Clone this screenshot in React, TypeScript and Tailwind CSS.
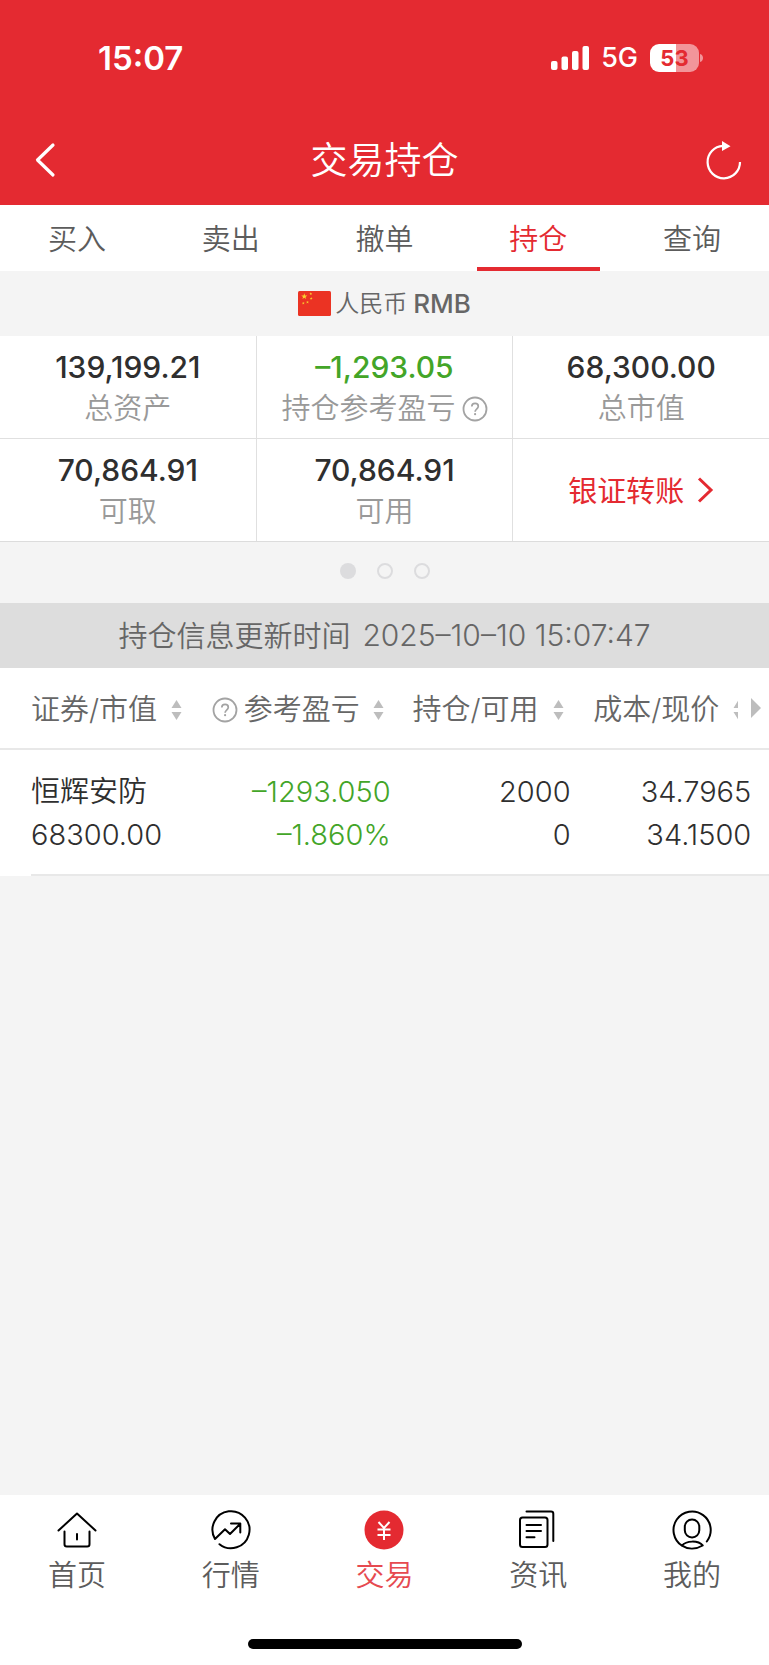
import React from "react";

const BODY_FONT = "font-['Inter','Noto_Sans_CJK_SC',sans-serif]";

function SortIcon() {
  return (
    <svg width="11" height="20" viewBox="0 0 11 20" className="shrink-0" aria-hidden="true">
      <path d="M5.5 0 10.5 8H.5ZM.5 12h10l-5 8Z" fill="#bdbdbd" />
    </svg>
  );
}

function HelpIcon() {
  return (
    <svg width="26" height="26" viewBox="0 0 26 26" fill="none" className="shrink-0" aria-hidden="true">
      <circle cx="13" cy="13" r="11.5" stroke="#a3a3a3" strokeWidth="1.8" />
      <path
        d="M9.8 10.6c0-2 1.4-3.3 3.3-3.3s3.2 1.2 3.2 2.9c0 1.4-.8 2.1-1.7 2.9-1 .9-1.5 1.4-1.5 2.7"
        stroke="#a3a3a3"
        strokeWidth="1.7"
      />
      <circle cx="13.1" cy="18.2" r="1.1" fill="#a3a3a3" />
    </svg>
  );
}

function StatusBar() {
  return (
    <div className="flex h-[115px] items-center justify-between pr-[65px] pl-[98px]">
      <span className="text-[33px] leading-10 font-semibold">15:07</span>
      <div className="flex items-center">
        <svg width="38" height="24" viewBox="0 0 38 24" fill="#fff" aria-hidden="true">
          <rect x="0" y="15" width="6.5" height="9" rx="2" />
          <rect x="10.5" y="10.5" width="6.5" height="13.5" rx="2" />
          <rect x="21" y="5" width="6.5" height="19" rx="2" />
          <rect x="31.5" y="0" width="6.5" height="24" rx="2" />
        </svg>
        <span className="ml-3 text-[27px] leading-8 font-medium">5G</span>
        <div className="ml-3 flex h-7 w-[49px] items-center justify-center rounded-[9px] bg-linear-to-r from-white from-53% to-[#f2959a] to-53% text-[22px] leading-7 font-bold text-[#e42a31]">
          53
        </div>
        <svg width="4" height="10" viewBox="0 0 4 10" className="ml-px" aria-hidden="true">
          <path d="M0 1c4 1 4 7 0 8Z" fill="#f2959a" />
        </svg>
      </div>
    </div>
  );
}

function TitleBar() {
  return (
    <div className="flex h-[90px] items-center justify-between pr-6 pl-7">
      <button type="button" aria-label="返回" className="flex size-9 items-center justify-center">
        <svg width="36" height="36" viewBox="0 0 36 36" fill="none" stroke="#fff" aria-hidden="true">
          <path d="M25 3 9.5 18 25 33" strokeWidth="3.2" strokeLinecap="round" strokeLinejoin="round" />
        </svg>
      </button>
      <h1 className="pt-[2px] text-[37px] leading-[48px] font-[350]">交易持仓</h1>
      <button type="button" aria-label="刷新" className="flex size-10 items-center justify-center">
        <svg width="40" height="40" viewBox="0 0 40 40" fill="none" aria-hidden="true">
          <path d="M35 22A16.2 16.2 0 1 1 18 5.9" stroke="#fff" strokeWidth="2.2" />
          <path d="M17 1 25.5 6.2 17 11Z" fill="#fff" />
        </svg>
      </button>
    </div>
  );
}

const tabs = ["买入", "卖出", "撤单", "持仓", "查询"];

function Tabs() {
  return (
    <nav className="grid h-[66px] grid-cols-5 bg-white text-[29px] font-[350] text-[#5c5c5c]">
      {tabs.map((tab) => (
        <button key={tab} type="button" className="flex flex-col items-center">
          <span
            className={
              tab === "持仓" ? "flex flex-1 items-center pt-[7px] text-[#e42a31]" : "flex flex-1 items-center pt-[7px]"
            }
          >
            {tab}
          </span>
          <span className={tab === "持仓" ? "h-1 w-4/5 bg-[#e42a31]" : "h-1 w-4/5"} />
        </button>
      ))}
    </nav>
  );
}

function Star({ x, y, r }: { x: number; y: number; r: number }) {
  const points = Array.from({ length: 10 }, (_, i) => {
    const radius = i % 2 ? r * 0.4 : r;
    const angle = (Math.PI / 5) * i - Math.PI / 2;
    return `${x + radius * Math.cos(angle)},${y + radius * Math.sin(angle)}`;
  }).join(" ");
  return <polygon points={points} fill="#f8d02e" />;
}

function Currency() {
  return (
    <div className="flex h-[65px] items-center justify-center text-[24px] text-[#666]">
      <svg width="33" height="25" viewBox="0 0 33 25" className="mr-1" aria-hidden="true">
        <rect width="33" height="25" rx="1.5" fill="#eb3323" />
        <Star x={6.3} y={5.5} r={3.2} />
        <Star x={12.8} y={2.8} r={1.5} />
        <Star x={13.2} y={7.5} r={1.5} />
        <Star x={9.5} y={11.2} r={1.5} />
        <Star x={5.3} y={12.2} r={1.5} />
      </svg>
      <span className="font-[350]">人民币</span>
      <span className="ml-[6px] text-[26px] font-medium">RMB</span>
    </div>
  );
}

type Figure = { value: string; label: string; help?: boolean; loss?: boolean };

const figures: Figure[] = [
  { value: "139,199.21", label: "总资产" },
  { value: "–1,293.05", label: "持仓参考盈亏", help: true, loss: true },
  { value: "68,300.00", label: "总市值" },
  { value: "70,864.91", label: "可取" },
  { value: "70,864.91", label: "可用" },
];

function Summary() {
  return (
    <section className="grid grid-cols-3 gap-px border-b border-[#dcdcdc] bg-[#e0e0e0]">
      {figures.map((f) => (
        <div key={f.label} className="flex flex-col items-center bg-white pt-[10px] pb-2 leading-[42px]">
          <span
            className={
              f.loss ? "text-[30px] font-[450] text-[#43a528]" : "text-[30px] font-[450] text-[#2f2f2f]"
            }
          >
            {f.value}
          </span>
          <span className="flex items-center gap-[6px] text-[29px] font-[350] text-[#999]">
            {f.label}
            {f.help && <HelpIcon />}
          </span>
        </div>
      ))}
      <a href="#transfer" className="flex items-center justify-center gap-3 bg-white text-[29px] text-[#e42a31]">
        <span className="pt-[3px]">银证转账</span>
        <svg width="18" height="28" viewBox="0 0 18 28" fill="none" aria-hidden="true">
          <path d="M3 2.5 15 14 3 25.5" stroke="#e42a31" strokeWidth="3" />
        </svg>
      </a>
    </section>
  );
}

function Dots() {
  return (
    <div className="flex h-[61px] items-center justify-center gap-[21px] pb-1">
      <span className="size-4 rounded-full bg-[#dcdcde]" />
      <span className="size-4 rounded-full border-2 border-[#dcdcde]" />
      <span className="size-4 rounded-full border-2 border-[#dcdcde]" />
    </div>
  );
}

function Holdings() {
  const lines = "border-b-2 border-[#e8e8e8] pt-5 pb-[18px] leading-[43px]";
  return (
    <table className="w-full table-fixed border-collapse bg-white text-[29px]">
      <colgroup>
        <col className="w-[27.4%]" />
        <col className="w-[23.4%]" />
        <col className="w-[23.4%]" />
        <col className="w-[23.5%]" />
        <col />
      </colgroup>
      <thead>
        <tr className="h-[81px] border-b-2 border-[#e8e8e8] whitespace-nowrap text-[#666]">
          <th className="p-0 pt-1 pl-[31px] font-[350]">
            <button type="button" className="flex items-center gap-[14px]">
              证券/市值
              <SortIcon />
            </button>
          </th>
          <th className="p-0 pt-1 pr-[7px] font-[350]">
            <button type="button" className="ml-auto flex items-center gap-[13px]">
              <span className="flex items-center gap-[6px]">
                <HelpIcon />
                参考盈亏
              </span>
              <SortIcon />
            </button>
          </th>
          <th className="p-0 pt-1 pr-[7px] font-[350]">
            <button type="button" className="ml-auto flex items-center gap-[14px]">
              持仓/可用
              <SortIcon />
            </button>
          </th>
          <th className="p-0 pt-1 pr-[13px] font-[350]">
            <button type="button" className="ml-auto flex items-center gap-[14px]">
              成本/现价
              <span className="w-[5px] overflow-hidden">
                <SortIcon />
              </span>
            </button>
          </th>
          <th className="p-0">
            <svg width="10" height="20" viewBox="0 0 10 20" aria-hidden="true">
              <path d="M0 0 10 10 0 20Z" fill="#bdbdbd" />
            </svg>
          </th>
        </tr>
      </thead>
      <tbody>
        <tr className="text-right font-[350] text-[#2f2f2f]">
          <td className="p-0 pl-[31px] text-left">
            <div className={lines}>
              恒辉安防
              <br />
              68300.00
            </div>
          </td>
          <td className="p-0 text-[#43a528]">
            <div className={lines}>
              –1293.050
              <br />
              –1.860%
            </div>
          </td>
          <td className="p-0">
            <div className={lines}>
              2000
              <br />0
            </div>
          </td>
          <td className="p-0">
            <div className={lines}>
              34.7965
              <br />
              34.1500
            </div>
          </td>
          <td className="p-0">
            <div className={lines}>
              <br />
              <br />
            </div>
          </td>
        </tr>
      </tbody>
    </table>
  );
}

const stroke = { fill: "none", stroke: "#000", strokeWidth: 2, strokeLinecap: "round", strokeLinejoin: "round" } as const;

const navItems = [
  {
    label: "首页",
    icon: (
      <g {...stroke}>
        <path d="M1.5 20.5 20 3.5l18.500 17M7.5 21.5v12.700q0 2.300 2.300 2.300h20.400q2.300 0 2.300-2.300V21.500M20 24v5.500" />
      </g>
    ),
  },
  {
    label: "行情",
    icon: (
      <g {...stroke}>
        <path d="M8.500 34.200A18.500 18.500 0 1 0 4 29l10-9.800 5 4.800L29 14M20 13.500h9.300v9" />
      </g>
    ),
  },
  {
    label: "交易",
    icon: (
      <g>
        <circle cx="20" cy="20" r="19.5" fill="#e42a31" />
        <path
          d="m14.500 12 5.500 6 5.500-6M13.500 19.500h13M13.500 25h13M20 18V30"
          fill="none"
          stroke="#fff"
          strokeWidth="2"
        />
      </g>
    ),
  },
  {
    label: "资讯",
    icon: (
      <g {...stroke}>
        <rect x="2" y="7.5" width="27.5" height="29.5" rx="2.5" />
        <path d="M8.500 1.500H33q2.300 0 2.300 2.300V31M8.500 15H23M8.500 21H23M8.500 27.200h8" />
      </g>
    ),
  },
  {
    label: "我的",
    icon: (
      <g {...stroke}>
        <path d="M34.800 31.500A18.600 18.600 0 1 0 10 35.700c6 4 14 3.800 20.700-.2-4.200-5.200-16.500-5.200-20.700.2" />
        <rect x="12.8" y="9.5" width="14.5" height="18" rx="7.2" />
      </g>
    ),
  },
];

function BottomNav() {
  return (
    <footer className="mt-auto bg-white">
      <nav className="grid grid-cols-5 pt-[15px] text-[29px] leading-[42px] font-[350] text-[#5c5c5c]">
        {navItems.map((item) => (
          <a
            key={item.label}
            href={"#" + item.label}
            className={
              item.label === "交易"
                ? "flex flex-col items-center gap-[5px] text-[#e64a50]"
                : "flex flex-col items-center gap-[5px]"
            }
          >
            <svg width="40" height="40" viewBox="0 0 40 40" aria-hidden="true">
              {item.icon}
            </svg>
            {item.label}
          </a>
        ))}
      </nav>
      <div className="flex justify-center pt-[42px] pb-4">
        <div className="h-[10px] w-[274px] rounded-full bg-black" />
      </div>
    </footer>
  );
}

export default function App() {
  return (
    <div lang="zh-CN" className={`flex min-h-screen flex-col bg-[#f4f4f4] ${BODY_FONT}`}>
      <header className="bg-[#e42a31] text-white">
        <StatusBar />
        <TitleBar />
      </header>
      <Tabs />
      <Currency />
      <Summary />
      <Dots />
      <div className="flex h-[65px] items-center justify-center gap-3 bg-[#ddd] font-[350] text-[#666]">
        <span className="pt-[2px] text-[29px]">持仓信息更新时间</span>
        <span className="text-[30px]">2025–10–10 15:07:47</span>
      </div>
      <Holdings />
      <BottomNav />
    </div>
  );
}
